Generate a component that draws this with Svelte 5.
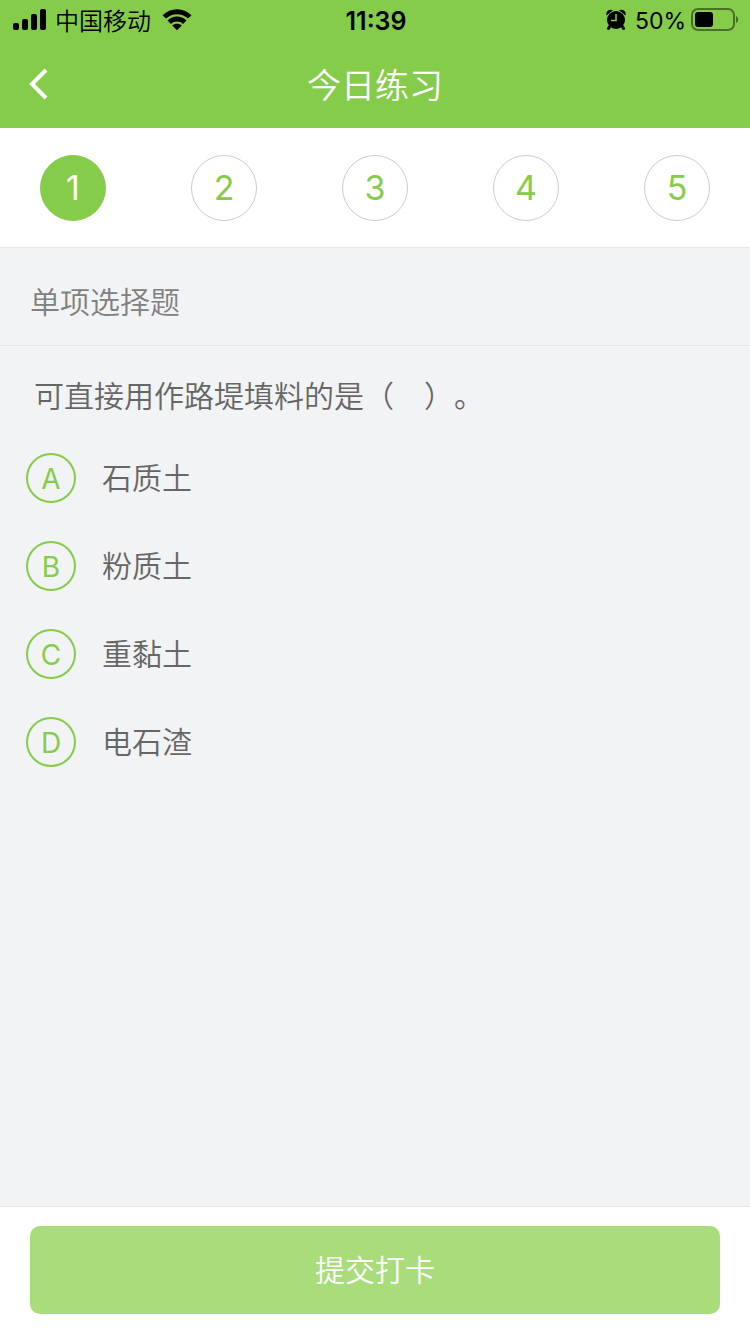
<script>
  const steps = [1, 2, 3, 4, 5];
  const question = {
    type: '单项选择题',
    title: '可直接用作路堤填料的是（　）。',
    options: [
      { key: 'A', text: '石质土' },
      { key: 'B', text: '粉质土' },
      { key: 'C', text: '重黏土' },
      { key: 'D', text: '电石渣' }
    ]
  };

  let current = $state(1);
  let answer = $state('');
</script>

<div class="page">
  <header>
    <div class="status">
      <div class="side">
        <svg class="signal" width="34" height="22" viewBox="0 0 34 22" aria-hidden="true">
          <rect x="0" y="14" width="6" height="7" rx="2" />
          <rect x="9" y="10" width="6" height="11" rx="2" />
          <rect x="18" y="5" width="6" height="16" rx="2" />
          <rect x="27" y="0" width="6" height="21" rx="2" />
        </svg>
        <span class="carrier">中国移动</span>
        <svg width="30" height="22" viewBox="0 0 30 22" aria-hidden="true">
          <path d="M0.500 6.200C8.500 -1.800 21.500 -1.800 29.500 6.200L26 9.600C19.800 3.800 10.200 3.800 4 9.600Z" />
          <path d="M5.500 11.500C10.800 6.300 19.200 6.300 24.500 11.500L21 14.900C17.600 11.800 12.400 11.800 9 14.900Z" />
          <path d="M10.200 16.500C13 14 17 14 19.800 16.500L15 21.300Z" />
        </svg>
      </div>
      <span class="time">11:39</span>
      <div class="side right">
        <svg width="20" height="22" viewBox="0 0 20 22" aria-hidden="true">
          <circle cx="10" cy="11" r="9" />
          <path d="M0.500 6.500C-0.500 2 3 -0.500 7 1.200Z" />
          <path d="M19.500 6.500C20.500 2 17 -0.500 13 1.200Z" />
          <path d="M4 17L2.500 19.500M16 17L17.500 19.500" stroke="#000" stroke-width="3" stroke-linecap="round" />
          <path d="M10 5V11.500H5" fill="none" stroke="#86cc4b" stroke-width="1.500" />
        </svg>
        <span class="percent">50%</span>
        <svg width="48" height="24" viewBox="0 0 48 24" aria-hidden="true">
          <rect x="1" y="1" width="42" height="21" rx="6" fill="none" stroke="#000" stroke-opacity="0.450" stroke-width="2" />
          <rect x="4" y="4" width="18" height="15" rx="3" />
          <path d="M45 8C48 9 48 14 45 15Z" fill-opacity="0.450" />
        </svg>
      </div>
    </div>
    <nav>
      <button class="back" aria-label="返回">
        <svg width="20" height="32" viewBox="0 0 20 32" aria-hidden="true">
          <path d="M17 2L3 16L17 30" fill="none" stroke="#fff" stroke-width="4" />
        </svg>
      </button>
      <h1>今日练习</h1>
    </nav>
  </header>

  <div class="steps">
    {#each steps as n}
      <button class="step" class:active={n === current} onclick={() => (current = n)}>{n}</button>
    {/each}
  </div>

  <main>
    <h2>{question.type}</h2>
    <fieldset>
      <legend>{question.title}</legend>
      {#each question.options as opt}
        <label class="option">
          <span class="mark">
            <input type="radio" name="answer" value={opt.key} bind:group={answer} />
            <span class="key">{opt.key}</span>
          </span>
          <span>{opt.text}</span>
        </label>
      {/each}
    </fieldset>
  </main>

  <footer>
    <button class="submit">提交打卡</button>
  </footer>
</div>

<style>
  :global(body) {
    margin: 0;
    background: #f2f3f5;
  }
  .page {
    display: flex;
    flex-direction: column;
    min-height: 100vh;
    color: #666;
    font-family: Inter, 'Noto Sans CJK SC', sans-serif;
    font-size: 30px;
    font-weight: 350;
    line-height: 40px;
    text-spacing-trim: space-all;
  }
  button {
    padding: 0;
    border: 0;
    background: none;
    font: inherit;
    cursor: pointer;
  }
  header {
    background: #86cc4b;
  }
  svg {
    display: block;
    flex: none;
  }

  .status {
    display: grid;
    grid-template-columns: 1fr auto 1fr;
    align-items: center;
    height: 40px;
    padding: 0 11px 0 13px;
    color: #000;
    font-size: 24px;
    line-height: 36px;
  }
  .side {
    display: flex;
    align-items: center;
    gap: 8px;
  }
  .carrier {
    margin-right: 3px;
    padding-top: 4px;
  }
  .right {
    justify-content: flex-end;
    gap: 5px;
  }
  .percent {
    margin-left: 4px;
    padding-top: 2px;
    font-size: 23px;
    font-weight: 400;
  }
  .time {
    padding-top: 2px;
    font-size: 25px;
    font-weight: 600;
  }

  nav {
    display: grid;
    grid-template-columns: 78px 1fr 78px;
    align-items: center;
    height: 88px;
  }
  .back {
    display: flex;
    align-items: center;
    height: 88px;
    padding-left: 29px;
  }
  h1 {
    margin: 0;
    padding-top: 4px;
    color: #fff;
    font-size: 34px;
    font-weight: 350;
    text-align: center;
  }

  .steps {
    display: flex;
    justify-content: space-between;
    padding: 27px 40px 26px;
    border-bottom: 1px solid #e5e6e8;
    background: #fff;
  }
  .step {
    box-sizing: border-box;
    width: 66px;
    height: 66px;
    border: 1px solid #ccc;
    border-radius: 50%;
    color: #86cc4b;
    font-size: 34px;
    font-weight: 400;
  }
  .step.active {
    border-color: #86cc4b;
    background: #86cc4b;
    color: #fff;
  }

  main {
    flex: 1;
  }
  h2 {
    margin: 0;
    padding: 34px 30px 23px;
    border-bottom: 1px solid #e5e6e8;
    color: #808080;
    font-size: 30px;
    font-weight: 350;
  }
  fieldset {
    margin: 0;
    padding: 0;
    border: 0;
  }
  legend {
    padding: 30px 34px 18px;
  }
  .option {
    display: flex;
    align-items: center;
    gap: 26px;
    height: 88px;
    padding: 0 26px;
    cursor: pointer;
  }
  .mark {
    display: grid;
    place-items: center;
    color: #86cc4b;
  }
  .mark > * {
    grid-area: 1 / 1;
  }
  .mark input {
    appearance: none;
    box-sizing: border-box;
    width: 50px;
    height: 50px;
    margin: 0;
    border: 2px solid #86cc4b;
    border-radius: 50%;
    cursor: pointer;
  }
  .mark input:checked {
    background: #86cc4b;
  }
  .mark input:checked + .key {
    color: #fff;
  }
  .key {
    padding-top: 2px;
    font-size: 28px;
    font-weight: 400;
    pointer-events: none;
  }

  footer {
    padding: 19px 30px 20px;
    border-top: 1px solid #e5e6e8;
    background: #fff;
  }
  .submit {
    width: 100%;
    height: 88px;
    border-radius: 10px;
    background: #a9dc7a;
    color: #fff;
  }
</style>
